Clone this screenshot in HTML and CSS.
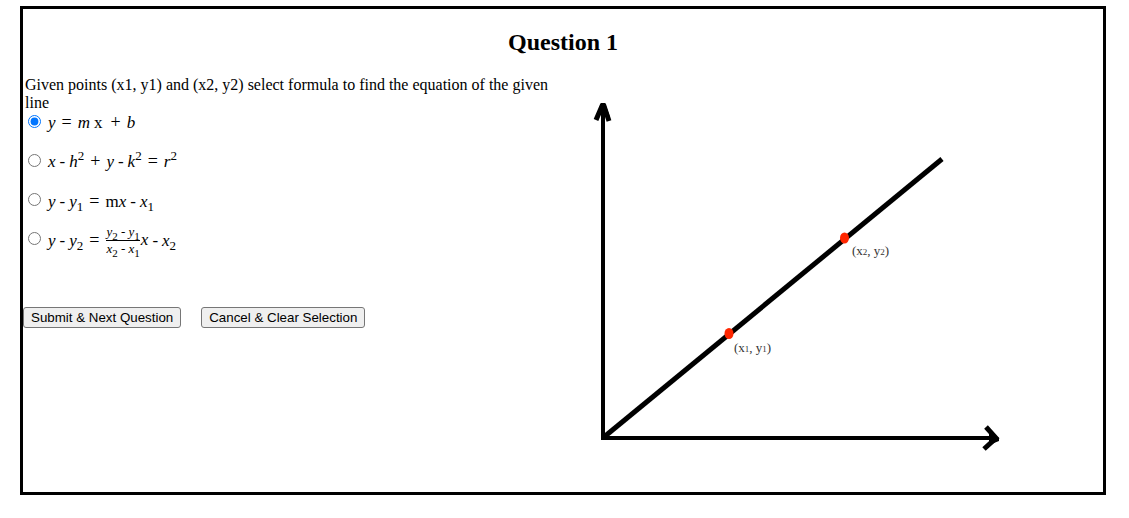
FILE: index.html
```html
<!DOCTYPE html>
<html lang="en">
<head>
<meta charset="utf-8">
<title>Question 1</title>
<link rel="stylesheet" href="styles.css">
</head>
<body>
<main class="quiz">
  <h2 class="title">Question 1</h2>
  <div class="columns">
    <form class="question">
      <fieldset class="options">
        <legend class="prompt">Given points (x1, y1) and (x2, y2) select formula to find the equation of the given line</legend>
        <div class="option">
          <input type="radio" name="answer" id="a1" checked>
          <label class="formula" for="a1"><i>y</i> <span class="op">=</span> <i>m</i> <span class="term">x</span> <span class="op">+</span> <i>b</i></label>
        </div>
        <div class="option">
          <input type="radio" name="answer" id="a2">
          <label class="formula" for="a2"><i>x</i> <span>-</span> <span><i>h</i><sup>2</sup></span> <span class="op">+</span> <i>y</i> <span>-</span> <span><i>k</i><sup>2</sup></span> <span class="op">=</span> <span><i>r</i><sup>2</sup></span></label>
        </div>
        <div class="option">
          <input type="radio" name="answer" id="a3">
          <label class="formula subscripted" for="a3"><i>y</i> <span>-</span> <span><i>y</i><sub>1</sub></span> <span class="op">=</span> <span>m<i>x</i></span> <span>-</span> <span><i>x</i><sub>1</sub></span></label>
        </div>
        <div class="option">
          <input type="radio" name="answer" id="a4">
          <label class="formula subscripted" for="a4"><i>y</i> <span>-</span> <span><i>y</i><sub>2</sub></span> <span class="op">=</span> <span class="product"><span class="fraction"><span class="numerator"><i>y</i><sub>2</sub> - <i>y</i><sub>1</sub></span><span class="denominator"><i>x</i><sub>2</sub> - <i>x</i><sub>1</sub></span></span><i>x</i></span> <span>-</span> <span><i>x</i><sub>2</sub></span></label>
        </div>
      </fieldset>
      <div class="actions">
        <button type="submit">Submit &amp; Next Question</button>
        <button type="reset">Cancel &amp; Clear Selection</button>
      </div>
    </form>
    <svg class="graph" viewBox="583 76 520 400" role="img" aria-label="Line through two points">
      <g fill="none" stroke="#000">
        <path stroke-width="4" d="M603 108V438H992"/>
        <path stroke-width="5" d="M596 120L602 106H604L609 121M986 427L996 438L984 449"/>
        <path stroke-width="5" d="M604 437L942 159"/>
      </g>
      <path d="M596 117L601 103H605L610 117L603 114ZM989 432L999 438V441L989 445Z"/>
      <ellipse cx="729" cy="333.500" rx="4.500" ry="5.500" fill="#ff2600"/>
      <ellipse cx="844.500" cy="238" rx="4.500" ry="5.500" fill="#ff2600"/>
      <text class="point" x="734" y="352">(x<tspan class="index">1</tspan>, y<tspan class="index">1</tspan>)</text>
      <text class="point" x="852" y="255">(x<tspan class="index">2</tspan>, y<tspan class="index">2</tspan>)</text>
    </svg>
  </div>
</main>
</body>
</html>
```
FILE: styles.css
```css
body {
  margin: 6px 23px 23px 20px;
  background: #fff;
  color: #000;
  font: 16px/18px "Liberation Serif", "Times New Roman", serif;
}

.quiz {
  border: 3px solid #000;
  padding-bottom: 16px;
}

.title {
  margin: 19px 0 20px;
  font-size: 24px;
  line-height: 28px;
  text-align: center;
}

.columns {
  display: grid;
  grid-template-columns: 560fr 520fr;
}

.options {
  margin: 0;
  border: 0;
  padding: 0 2px;
}

.prompt {
  max-width: 530px;
  padding: 0;
}

.option {
  display: flex;
  align-items: flex-start;
  gap: 7px;
  height: 39px;
}

.option input {
  width: 13px;
  height: 13px;
  margin: 3px 0 0 3px;
}

.formula {
  display: flex;
  align-items: baseline;
  gap: 4px;
  height: 18px;
  padding-top: 1px;
  font-size: 17px;
}

.subscripted {
  padding-top: 2px;
}

.formula sup,
.formula sub {
  font-size: 13px;
  line-height: 1px;
}

.op {
  margin: 0 2px;
  font-size: 18px;
}

.term {
  margin-right: 2px;
}

.product {
  display: flex;
  align-items: center;
  align-self: center;
  height: 18px;
}

.fraction {
  display: flex;
  flex-direction: column;
  margin: 0 1px;
  font-size: 13px;
  line-height: 16px;
  text-align: center;
}

.fraction sub {
  font-size: 11px;
}

.numerator {
  border-bottom: 1px solid #000;
}

.actions {
  display: flex;
  gap: 20px;
  margin-top: 39px;
}

.actions button {
  height: 21px;
  border: 1px solid #767676;
  border-radius: 3px;
  padding: 0 7px;
  background: #efefef;
  color: #000;
  font-family: "Liberation Sans", Arial, sans-serif;
}

.graph {
  width: 100%;
}

.point {
  fill: #333;
  font: 13px "Liberation Serif", "Times New Roman", serif;
}

.index {
  font-size: 9px;
}
```
